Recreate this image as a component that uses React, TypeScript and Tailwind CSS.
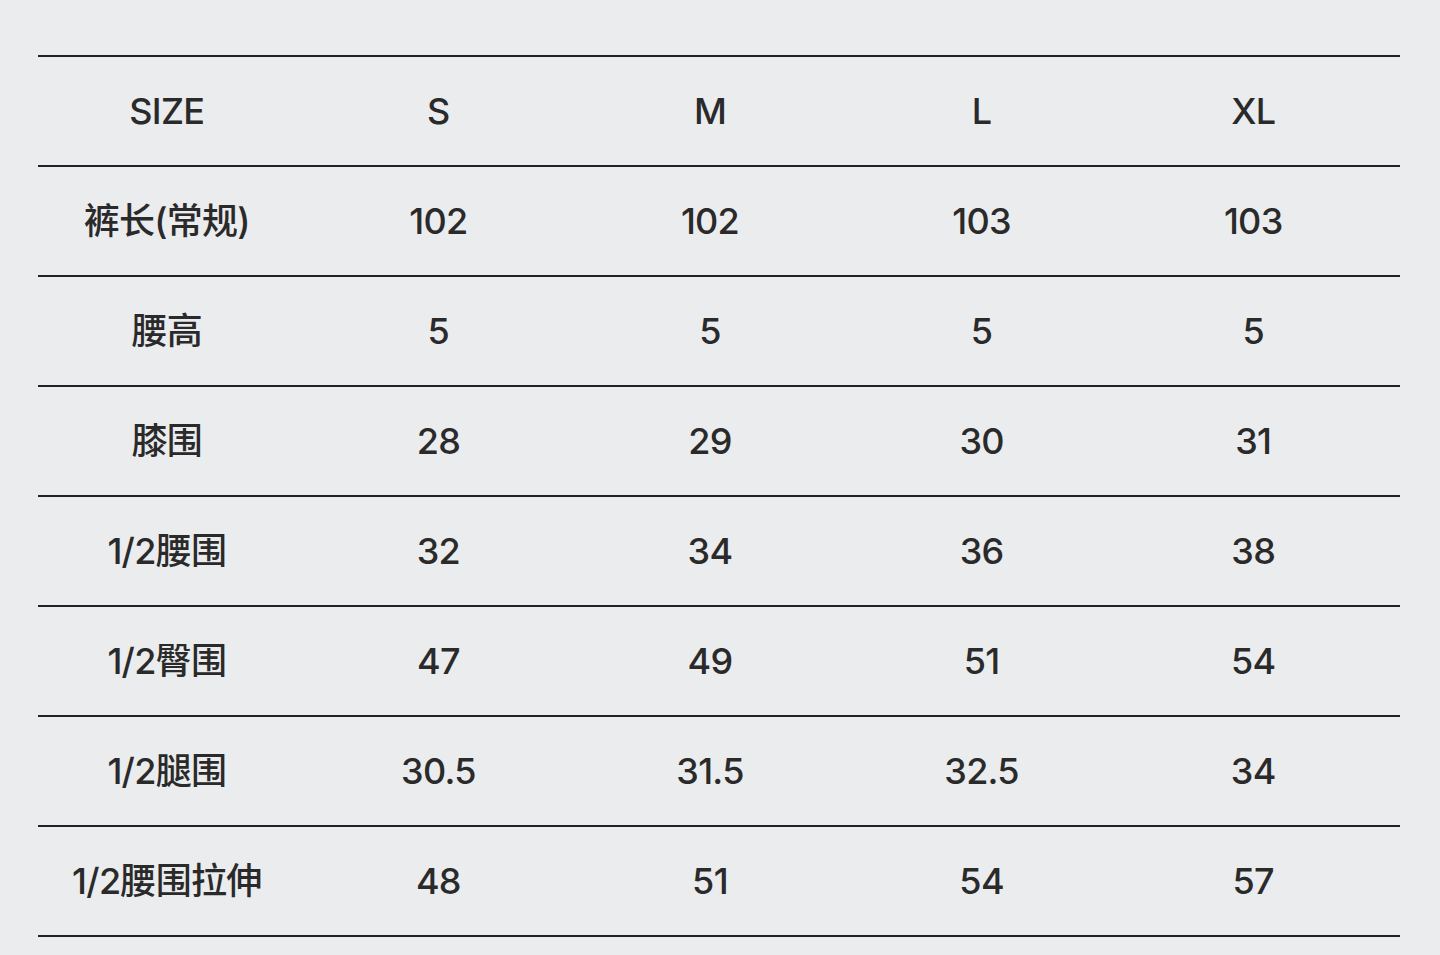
import React from "react";

const rows: string[][] = [
  ["SIZE", "S", "M", "L", "XL"],
  ["裤长(常规)", "102", "102", "103", "103"],
  ["腰高", "5", "5", "5", "5"],
  ["膝围", "28", "29", "30", "31"],
  ["1/2腰围", "32", "34", "36", "38"],
  ["1/2臀围", "47", "49", "51", "54"],
  ["1/2腿围", "30.5", "31.5", "32.5", "34"],
  ["1/2腰围拉伸", "48", "51", "54", "57"],
];

export default function App() {
  return (
    <div
      className="w-[1440px] h-[955px] bg-[#ebecee] text-[#2a2a2a] pt-[55px]"
      style={{ fontFamily: 'Inter, "Noto Sans CJK SC", sans-serif' }}
    >
      <div className="ml-[38px] w-[1362px] border-t-2 border-[#222]">
        {rows.map((r, i) => (
          <div key={i} className="h-[110px] border-b-2 border-[#222] flex items-center">
            <div className="grid grid-cols-5 -ml-[7px] mr-[11px] flex-1">
              {r.map((c, j) => (
                <div
                  key={j}
                  className="text-center text-[36px] font-medium tracking-[-0.02em] leading-none"
                >
                  {c}
                </div>
              ))}
            </div>
          </div>
        ))}
      </div>
    </div>
  );
}
